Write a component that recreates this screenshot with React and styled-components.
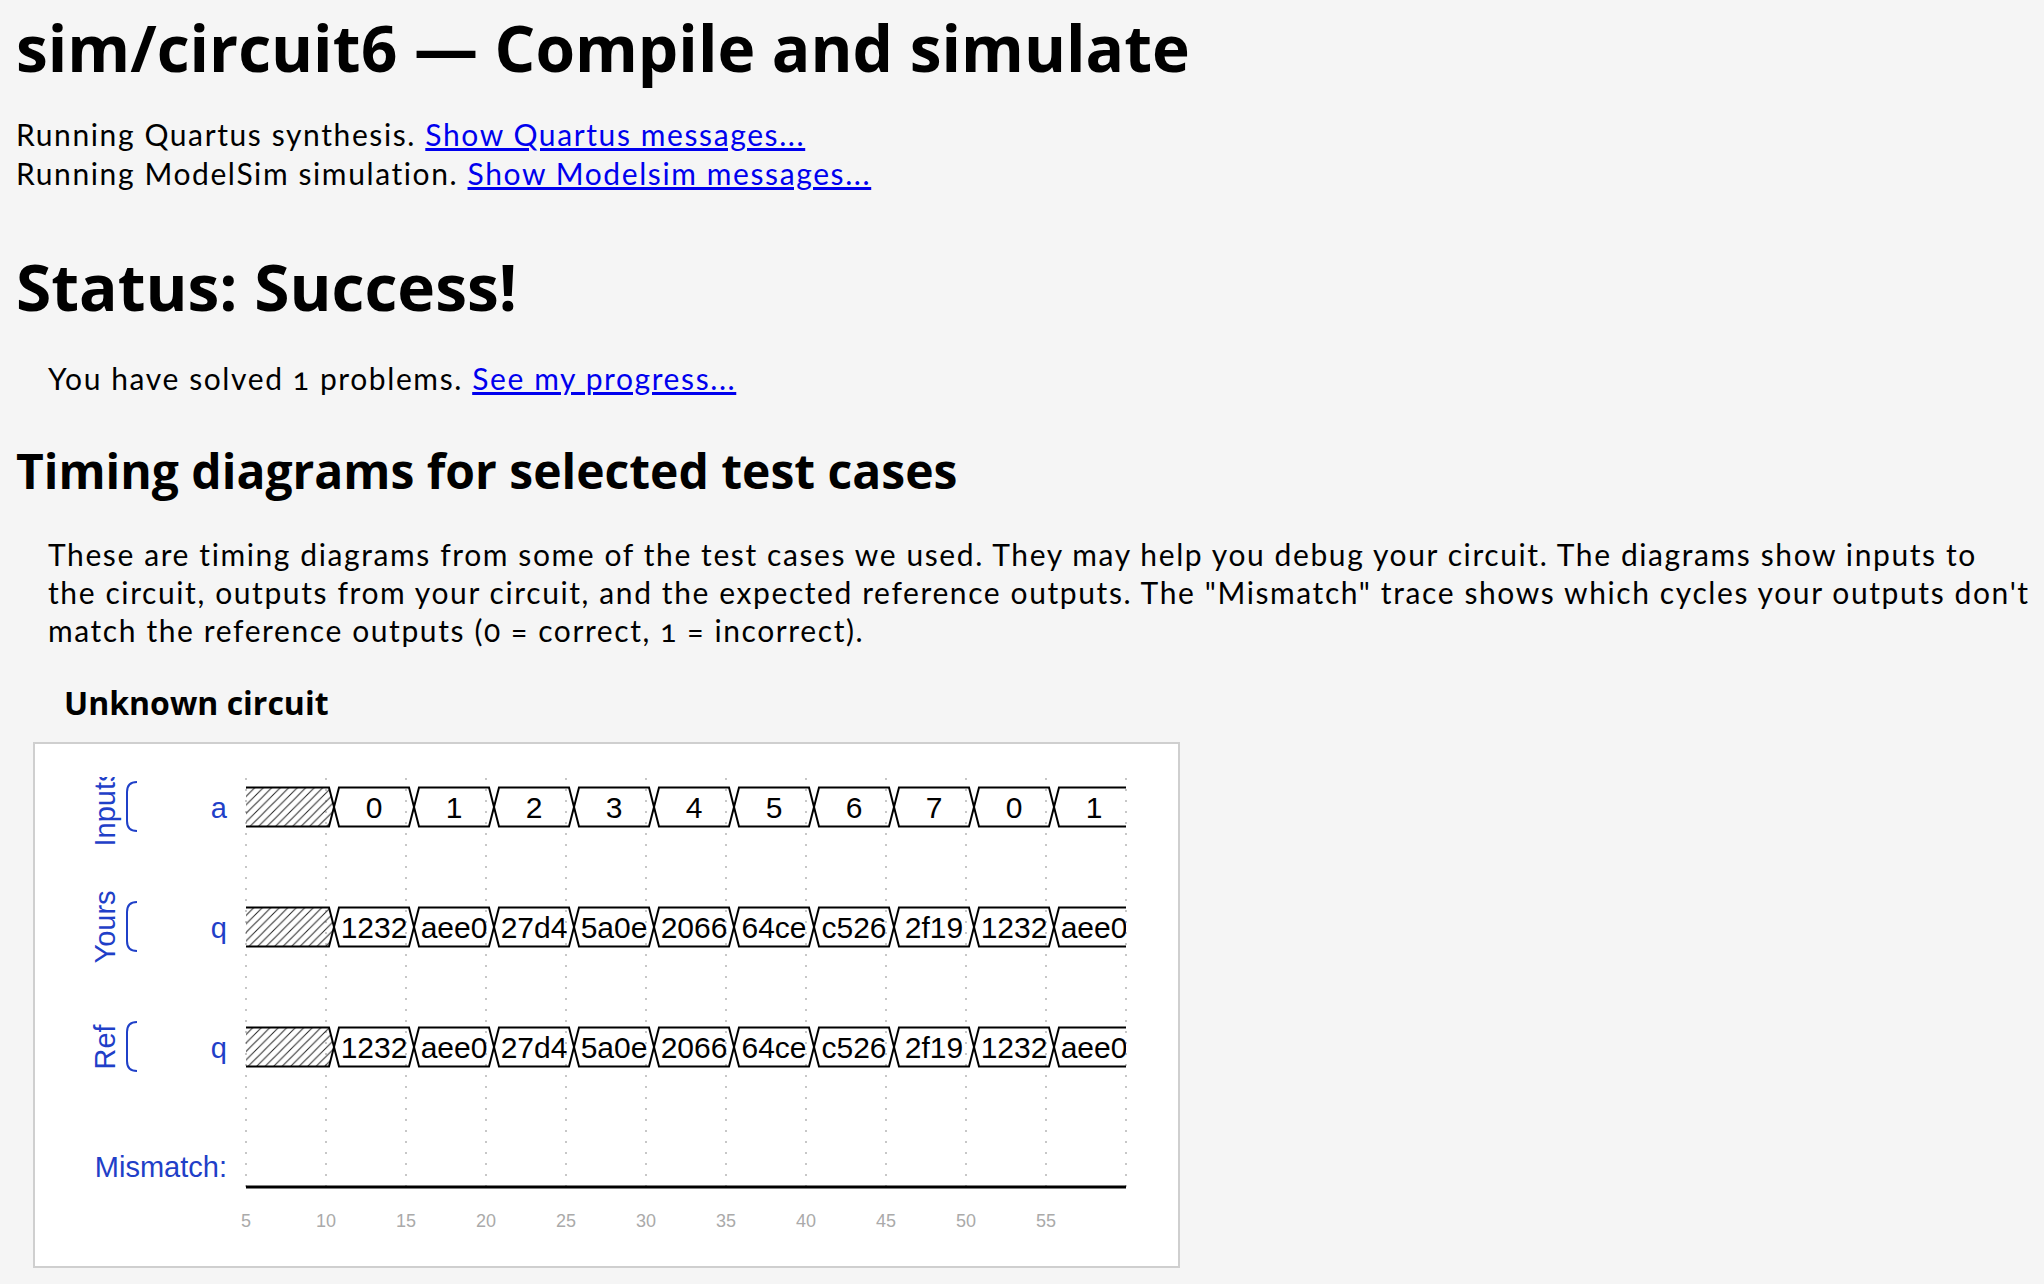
import React from 'react';
import styled, { createGlobalStyle } from 'styled-components';

const GlobalStyle = createGlobalStyle`
  body {
    margin: 0;
    background: #f5f5f5;
    color: #000;
  }
`;

const Page = styled.div`
  padding: 0 16px 16px;
  font-family: Lato, "Liberation Sans", sans-serif;
  font-size: 30px;
  letter-spacing: 1.6px;
  font-variant-numeric: oldstyle-nums;
`;

const Heading = styled.h1`
  margin: ${p => p.$gap}px 0 0;
  font-family: "Open Sans", "Noto Sans", sans-serif;
  font-weight: 700;
  font-size: ${p => p.$size}px;
  line-height: ${p => p.$lh}px;
  letter-spacing: 0;
`;

const Lines = styled.div`
  margin-top: ${p => p.$gap}px;
  padding-left: ${p => p.$indent || 0}px;
  line-height: ${p => p.$lh || 39}px;
  white-space: nowrap;
`;

const Link = styled.a`
  color: #0000ee;
  text-decoration: underline;
`;

const Caption = styled.h3`
  margin: 34px 0 0;
  padding-left: 48px;
  font-family: "Open Sans", "Noto Sans", sans-serif;
  font-weight: 700;
  font-size: 32px;
  line-height: 40px;
  letter-spacing: 0;
`;

const DiagramBox = styled.div`
  margin: 19px 0 0 17px;
  width: 1143px;
  height: 522px;
  background: #fff;
  border: 2px solid #cfcfcf;
`;

const Svg = styled.svg`
  display: block;
  font-family: "Liberation Sans", Arial, sans-serif;
  letter-spacing: 0;
  font-variant-numeric: normal;
`;

const SigText = styled.text`
  font-size: ${p => p.$size || 29}px;
  fill: ${p => p.$fill || '#1f40c8'};
  text-anchor: ${p => p.$anchor || 'middle'};
`;

const LEFT = 211;
const RIGHT = 1091;
const FIRST = 299;
const STEP = 80;
const D = 5;
const HALF = 19.5;

const qValues = ['1232', 'aee0', '27d4', '5a0e', '2066', '64ce', 'c526', '2f19', '1232', 'aee0'];

const rows = [
  { group: 'Inputs', name: 'a', mid: 63, values: ['0', '1', '2', '3', '4', '5', '6', '7', '0', '1'] },
  { group: 'Yours', name: 'q', mid: 183, values: qValues },
  { group: 'Ref', name: 'q', mid: 303, values: qValues }
];

function Bus({ mid, values }) {
  const top = mid - HALF;
  const bot = mid + HALF;
  return (
    <g>
      <polygon
        points={`${LEFT},${top} ${FIRST - D},${top} ${FIRST},${mid} ${FIRST - D},${bot} ${LEFT},${bot}`}
        fill="url(#hatch)"
      />
      <path
        d={`M${LEFT},${top} L${FIRST - D},${top} L${FIRST},${mid} L${FIRST - D},${bot} L${LEFT},${bot}`}
        fill="none"
        stroke="#000"
        strokeWidth="2"
      />
      {values.map((v, i) => {
        const x0 = FIRST + STEP * i;
        const last = i === values.length - 1;
        const x1 = x0 + STEP;
        const d = last
          ? `M${RIGHT},${top} L${x0 + D},${top} L${x0},${mid} L${x0 + D},${bot} L${RIGHT},${bot}`
          : `M${x0},${mid} L${x0 + D},${top} L${x1 - D},${top} L${x1},${mid} L${x1 - D},${bot} L${x0 + D},${bot} Z`;
        return (
          <g key={i}>
            <path d={d} fill="none" stroke="#000" strokeWidth="2" />
            <g clipPath="url(#plot)">
              <SigText x={x0 + 40} y={mid + 10.5} $size={30} $fill="#000">
                {v}
              </SigText>
            </g>
          </g>
        );
      })}
    </g>
  );
}

function TimingDiagram() {
  const grid = Array.from({ length: 12 }, (_, k) => LEFT + STEP * k);
  return (
    <DiagramBox>
      <Svg width="1143" height="522" viewBox="0 0 1143 522">
        <defs>
          <pattern id="hatch" patternUnits="userSpaceOnUse" width="8.5" height="8.5">
            <path d="M-1,9.5 L9.5,-1 M-1,1 L1,-1 M7.5,9.5 L9.5,7.5" stroke="#222" strokeWidth="1" />
          </pattern>
          <clipPath id="plot">
            <rect x={LEFT} y="0" width={RIGHT - LEFT} height="522" />
          </clipPath>
          <clipPath id="groups">
            <rect x="0" y="33" width="200" height="489" />
          </clipPath>
        </defs>

        {grid.map(x => (
          <line key={x} x1={x} x2={x} y1="34" y2="451" stroke="#b5b5b5" strokeWidth="1.5" strokeDasharray="2 9" />
        ))}

        {rows.map(r => (
          <g key={r.group}>
            <g clipPath="url(#groups)">
              <SigText transform={`translate(80 ${r.mid}) rotate(-90)`}>{r.group}</SigText>
            </g>
            <path
              d={`M102,${r.mid - 25} Q92,${r.mid - 25} 92,${r.mid - 15} L92,${r.mid + 14} Q92,${r.mid + 24} 102,${r.mid + 24}`}
              fill="none"
              stroke="#1f40c8"
              strokeWidth="2"
            />
            <SigText x="192" y={r.mid + 10.5} $anchor="end">{r.name}</SigText>
            <Bus mid={r.mid} values={r.values} />
          </g>
        ))}

        <SigText x="192" y="433" $anchor="end">Mismatch:</SigText>
        <line x1={LEFT} x2={RIGHT} y1="443" y2="443" stroke="#000" strokeWidth="3" />

        {grid.slice(0, 11).map((x, k) => (
          <SigText key={x} x={x} y="483" $size={18} $fill="#aaa">{5 + 5 * k}</SigText>
        ))}
      </Svg>
    </DiagramBox>
  );
}

export default function App() {
  return (
    <Page>
      <GlobalStyle />
      <Heading $gap={8} $size={64} $lh={80}>sim/circuit6 — Compile and simulate</Heading>
      <Lines $gap={27}>
        <div>Running Quartus synthesis. <Link href="#">Show Quartus messages...</Link></div>
        <div>Running ModelSim simulation. <Link href="#">Show Modelsim messages...</Link></div>
      </Lines>

      <Heading $gap={54} $size={64} $lh={80}>Status: Success!</Heading>
      <Lines $gap={32} $indent={32}>
        You have solved 1 problems. <Link href="#">See my progress...</Link>
      </Lines>

      <Heading as="h2" $gap={43} $size={48} $lh={60}>Timing diagrams for selected test cases</Heading>
      <Lines $gap={34} $indent={32} $lh={38}>
        These are timing diagrams from some of the test cases we used. They may help you debug your circuit. The diagrams show inputs to
        <br />
        the circuit, outputs from your circuit, and the expected reference outputs. The "Mismatch" trace shows which cycles your outputs don't
        <br />
        match the reference outputs (0 = correct, 1 = incorrect).
      </Lines>

      <Caption>Unknown circuit</Caption>
      <TimingDiagram />
    </Page>
  );
}
